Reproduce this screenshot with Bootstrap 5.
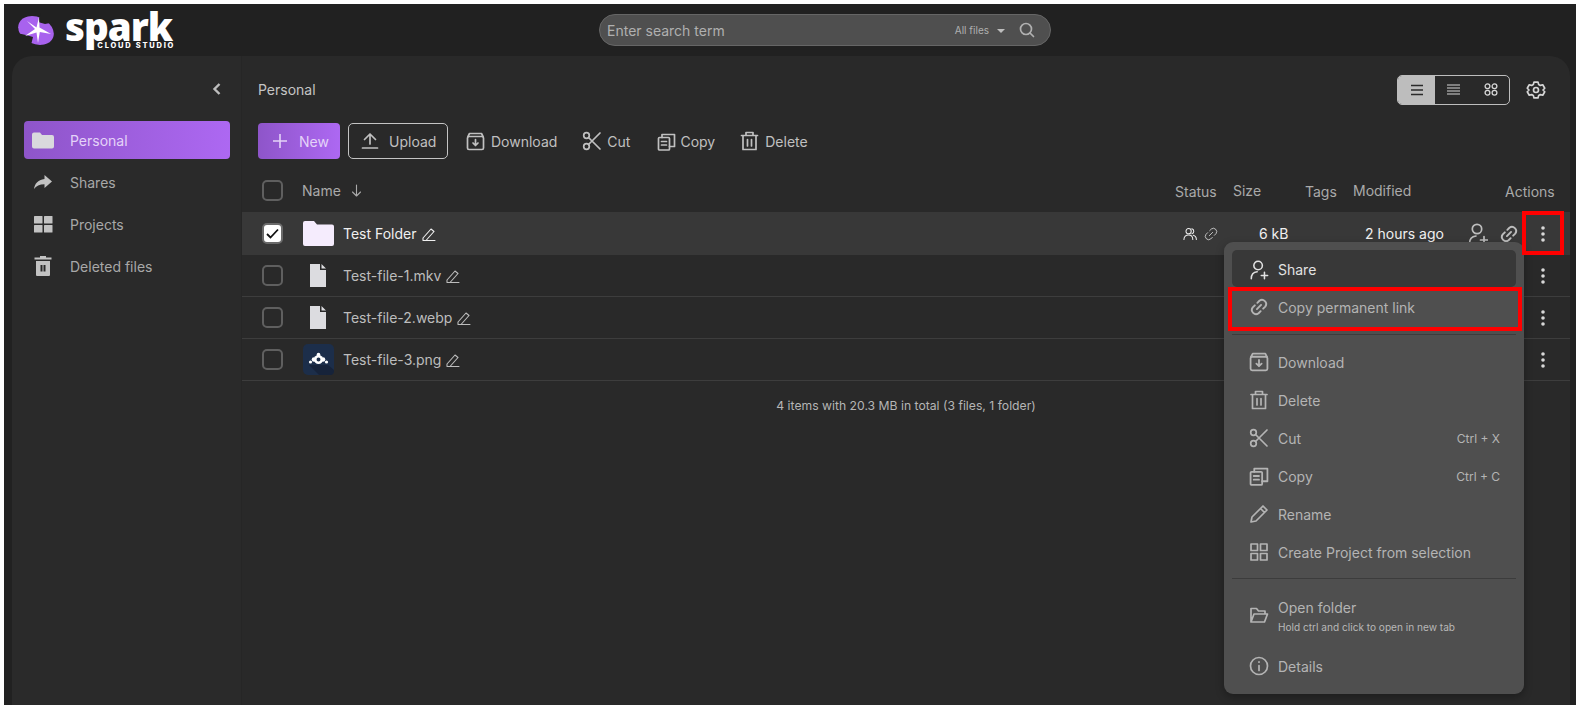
<!doctype html>
<html lang="en"><head><meta charset="utf-8">
<link href="https://cdn.jsdelivr.net/npm/bootstrap@5.3.0/dist/css/bootstrap.min.css" rel="stylesheet">
<style>
html,body{height:705px;overflow:hidden}
body{background:#fff;font-family:Inter,"Liberation Sans",sans-serif;font-size:14px;color:#bdbdbd;padding:4px 0 0 4px}
svg{display:block;flex:none}
.ic{fill:none;stroke:currentColor;stroke-width:1.7;stroke-linecap:round;stroke-linejoin:round}
.ic.thin{stroke-width:1.1}
.ic.mid{stroke-width:1.7}
.ic.link{stroke-width:2.3}
.ic.gear{stroke-width:2;color:#d6d6d6}
.shell{background:#212121;height:701px;display:flex;flex-direction:column}
.topbar{height:52px;flex:none;display:flex}
.logo{width:595px;flex:none;padding:9px 0 0 14px;gap:11px}
.wordmark{font-family:"Open Sans",sans-serif;font-weight:800;font-size:38.5px;line-height:27px;color:#fff;letter-spacing:-1px;height:27px}
.substudio{font-size:7.5px;font-weight:800;letter-spacing:1.75px;color:#fff;line-height:8px;text-align:right;margin:2px -3px 0 0}
.searchbox{margin-top:10px;width:452px;height:32px;background:#4f4f4f;border:1px solid #666;border-radius:16px;padding:0 15px 0 7px;font-size:14px;color:#b0b0b0}
.scope{font-size:10px}
.caret{width:0;height:0;border:4px solid transparent;border-top-color:#bdbdbd;border-bottom:0;margin:1px 14px 0 8px}
.workspace{flex:1;display:flex;margin:0 6px 0 8px;min-height:0}
.sidepane{width:230px;flex:none;background:#2a2a2a;border-radius:20px 0 0 0;border-right:1px solid #262626;padding:0 11px 0 12px}
.collapse-row{height:65px;padding:25px 7px 0 0;justify-content:flex-end;color:#bdbdbd}
.sideitem{height:38px;margin-bottom:4px;border-radius:4px;padding-left:7px;gap:15px;color:#a8a8a8}
.sideitem .sico{width:24px;display:flex;justify-content:center;color:#c2c2c2}
.sideitem.on{background:linear-gradient(90deg,#8e55c9,#ad68f2);color:#e4d3f8}
.sideitem.on .sico{color:#d9d9dd}
.mainpane{flex:1;background:#292929;border-radius:0 20px 0 0;min-width:0;position:relative}
.crumbline{height:67px;padding:0 24px 0 16px}
.crumbline .here{color:#c4c4c4}
.viewgroup{width:113px;height:30px;border:1px solid #bdbdbd;border-radius:5px;overflow:hidden;margin-right:16px;color:#d6d6d6}
.viewgroup span{flex:1;display:flex;align-items:center;justify-content:center}
.viewgroup span:first-child{background:#bdbdbd;color:#2a2a2a;flex:0 0 37px}
.toolbar{height:36px;padding-left:16px;color:#c0c0c0}
.btn-new{width:82px;height:36px;border:0;border-radius:4px;background:linear-gradient(90deg,#8e55c9,#ad68f2);color:#e4d3f8;gap:11px;padding:0 0 0 14px}
.btn-up{width:100px;height:36px;border:1px solid #c4c4c4;border-radius:5px;background:none;color:#c0c0c0;margin:0 18px 0 8px;gap:10px;padding:0 0 0 12px}
.tool{gap:4px;margin-right:25px}
.tool.gap6{gap:6px}
.tool.cutt{gap:5px;margin-right:27px}
.cols{display:grid;grid-template-columns:933px 58px 72px 48px 111px 106px}
.headrow{height:53px;padding-top:21px;color:#aaa;align-items:start}
.headname{padding-left:20px;gap:19px}
.headname .lbl{gap:10px}
.low{margin-top:1px}
.cellact{padding-left:41px}
.cbox{width:21px;height:21px;border:2px solid #5f5f5f;border-radius:5px;background:none;flex:none}
.filerow{height:42px;border-bottom:1px solid #3d3d3d;color:#bdbdbd;align-items:center}
.filerow.sel{background:#383838;border-bottom:0;color:#f0f0f0;height:43px}
.namecell{padding-left:20px}
.cellbox{margin-right:19px}
.fileic{width:32px;display:flex;justify-content:center;margin-right:9px}
.fname{margin-right:5px}
.cboxon{background:#fff;border-color:#6a6a6a;display:flex;align-items:center;justify-content:center;color:#111}
.statuscell{padding-left:8px;gap:6px}
.sizecell{padding-left:26px;white-space:nowrap}
.modcell{padding-left:12px;white-space:nowrap}
.actcell{justify-content:flex-end;padding-right:25px;color:#d8d8d8}
.actcell .u{margin-right:11px;color:#bdbdbd}
.actcell .l{margin-right:22px;color:#bdbdbd}
.summary{text-align:center;font-size:12.2px;color:#b5b5b5;margin-top:16px}
.redbox{position:absolute;border:4px solid #f00;pointer-events:none}
.redkebab{left:1280px;top:155px;width:42px;height:44px}
.redlink{left:986px;top:231px;width:294px;height:44px}
.ctxmenu{position:absolute;left:982px;top:186px;width:300px;height:452px;background:#4f4f4f;border-radius:9px;padding:8px 8px;color:#b4b4b4;box-shadow:0 3px 8px rgba(0,0,0,.3)}
.mi{height:38px;gap:9px;padding-left:17px;padding-right:16px;border-radius:5px}
.mi.shr{background:#383838;color:#e2e2e2;height:37px;margin-bottom:1px;padding-top:2px}
.mi.tall{height:50px;margin-bottom:1px}
.mi .kbd-hint{margin-left:auto;font-size:12px;color:#b4b4b4;margin-top:2px}
.mdiv{border-top:1px solid #3c3c3c}
.mdiv.first{margin:8px 0 8px}
.mdiv.second{margin:7px 0 11px}
.mi.tall + .mi{margin-top:7px}
.hint{font-size:10.1px;color:#b8b8b8;margin-top:3px;line-height:12px}
</style></head><body>
<div class="shell">
 <header class="topbar">
  <div class="logo d-flex">
   <svg width="36" height="35" viewBox="0 0 36 35"><ellipse cx="18" cy="17.500" rx="18.500" ry="13.500" transform="rotate(24 18 17.500)" fill="#a862ee"/><path d="M23 -1L20 9 27 11 37 9V-1zM-1 20L8 22 15 24 12 36H-1z" fill="#212121"/><path d="M21 4L21.500 14.500 33 21 21.800 19 20 30 18.500 19.500 7 23 17 16 9 8 18.500 14.500z" fill="#fff"/></svg>
   <div><div class="wordmark">spark</div><div class="substudio">CLOUD STUDIO</div></div>
  </div>
  <div class="searchbox d-flex align-items-center"><span class="flex-grow-1">Enter search term</span><span class="scope">All files</span><span class="caret"></span>
   <svg class="ic" width="16" height="16" viewBox="0 0 16 16"><circle cx="7" cy="7" r="5.500"/><path d="M11 11l3.500 3.500"/></svg></div>
 </header>
 <div class="workspace">
  <aside class="sidepane">
   <div class="collapse-row d-flex"><svg width="12" height="16" viewBox="0 0 12 16" fill="none" stroke="currentColor" stroke-width="2.400"><path d="M8.500 3L3.500 8l5 5"/></svg></div>
   <div class="sideitem on d-flex align-items-center"><span class="sico"><svg width="22" height="17" viewBox="0 0 22 16" fill="currentColor"><path d="M0 2a2 2 0 012-2h6l2 2.500h10a2 2 0 012 2V14a2 2 0 01-2 2H2a2 2 0 01-2-2z"/></svg></span>Personal</div>
   <div class="sideitem d-flex align-items-center"><span class="sico"><svg width="20" height="16" viewBox="0 0 20 16" fill="currentColor"><path d="M11.500 1L19 7.500 11.500 14v-3.800C6.500 10.200 3.200 11.800 1 15c.7-5 3.700-9.300 10.500-10z"/></svg></span>Shares</div>
   <div class="sideitem d-flex align-items-center"><span class="sico"><svg width="19" height="17" viewBox="0 0 19 17" fill="currentColor"><rect width="8.500" height="7.500" rx=".6"/><rect x="10" width="8.500" height="7.500" rx=".6"/><rect y="9" width="8.500" height="7.500" rx=".6"/><rect x="10" y="9" width="8.500" height="7.500" rx=".6"/></svg></span>Projects</div>
   <div class="sideitem d-flex align-items-center"><span class="sico"><svg width="18" height="20" viewBox="0 0 18 20" fill="currentColor"><path d="M6 0h6v1.500h5.500v2H.5v-2H6zM2 5h14v14a1 1 0 01-1 1H3a1 1 0 01-1-1zm4.500 4v6.500h2V9zm3 0v6.500h2V9z" fill-rule="evenodd"/></svg></span>Deleted files</div>
  </aside>
  <main class="mainpane">
   <div class="crumbline d-flex align-items-center justify-content-between"><span class="here">Personal</span>
    <div class="d-flex align-items-center">
     <div class="viewgroup d-flex">
      <span><svg width="14" height="12" viewBox="0 0 14 12" stroke="currentColor" stroke-width="1.500"><path d="M1 1.500h12M1 6h12M1 10.500h12"/></svg></span>
      <span><svg width="13" height="11" viewBox="0 0 13 11" stroke="currentColor" stroke-width="1.200"><path d="M0 1h13M0 4h13M0 7h13M0 10h13"/></svg></span>
      <span><svg width="14" height="13" viewBox="0 0 14 13" fill="none" stroke="currentColor" stroke-width="1.300"><circle cx="3.500" cy="3.300" r="2.400"/><circle cx="10.500" cy="3.300" r="2.400"/><circle cx="3.500" cy="9.700" r="2.400"/><circle cx="10.500" cy="9.700" r="2.400"/></svg></span>
     </div>
     <svg class="ic gear" width="20" height="20" viewBox="0 0 24 24"><circle cx="12" cy="12" r="3"/><path d="M9.600 2.500h4.800l.8 2.900 2 1.100 2.900-.8 2.400 4.200L20.400 12l2.100 2.100-2.400 4.200-2.900-.8-2 1.100-.8 2.900H9.600l-.8-2.900-2-1.100-2.900.8-2.400-4.200L3.600 12 1.500 9.900l2.400-4.200 2.900.8 2-1.100z"/></svg>
    </div></div>
   <div class="toolbar d-flex align-items-center">
    <button class="btn-new d-flex align-items-center"><svg width="16" height="16" viewBox="0 0 16 16" stroke="currentColor" stroke-width="1.600"><path d="M8 1v14M1 8h14"/></svg>New</button>
    <button class="btn-up d-flex align-items-center"><svg class="ic" width="18" height="18" viewBox="0 0 18 18"><path d="M9 12V2M3.500 7.500L9 2l5.500 5.500M1.500 16h15"/></svg>Upload</button>
    <span class="tool gap6 d-flex align-items-center"><svg class="ic" width="19" height="19" viewBox="0 0 19 19"><rect x="1.500" y="4.500" width="16" height="13" rx="1.500"/><path d="M2 4.500L3.500 1.500h12l1.500 3M9.500 7.500v6M7 11l2.500 2.500L12 11"/></svg>Download</span>
    <span class="tool cutt d-flex align-items-center"><svg class="ic" width="20" height="20" viewBox="0 0 20 20"><circle cx="4.500" cy="4.500" r="2.800"/><circle cx="4.500" cy="15.500" r="2.800"/><path d="M6.500 6.500L18 18M6.500 13.500L18 2"/></svg>Cut</span>
    <span class="tool d-flex align-items-center"><svg class="ic" width="19" height="19" viewBox="0 0 19 19"><rect x="1.500" y="5.500" width="11" height="12.500" rx="1"/><path d="M5 5.500V2.500h12.500v12h-5M4.500 9.500h5M4.500 13h5"/></svg>Copy</span>
    <span class="tool gap6 d-flex align-items-center"><svg class="ic" width="19" height="20" viewBox="0 0 19 20"><path d="M1.500 4.500h16M6 4.500V1.500h7v3M3 4.500h13V18.500H3zM7.500 8.500v6.500M11.500 8.500v6.500"/></svg>Delete</span>
   </div>
   <div class="headrow cols">
    <div class="headname d-flex"><span class="cbox"></span><span class="lbl d-flex align-items-center">Name <svg class="ic thin" width="11" height="13" viewBox="0 0 11 13"><path d="M5.500 1v11M1.500 8l4 4 4-4"/></svg></span></div>
    <span class="low">Status</span><span>Size</span><span class="low">Tags</span><span>Modified</span><span class="low cellact">Actions</span>
   </div>
   <div class="filerow sel cols">
    <div class="namecell d-flex align-items-center"><span class="cbox cboxon cellbox"><svg width="13" height="11" viewBox="0 0 13 11" fill="none" stroke="currentColor" stroke-width="1.800"><path d="M1 6l3.500 3.500L12 1.500"/></svg></span>
    <span class="fileic"><svg width="31" height="25" viewBox="0 0 31 25" fill="#f5ecfd"><path d="M0 2a2 2 0 012-2h9l3 3.500h15a2 2 0 012 2V23a2 2 0 01-2 2H2a2 2 0 01-2-2z"/></svg></span>
    <span class="fname">Test Folder</span><svg class="ic thin" width="14" height="14" viewBox="0 0 14 14"><path d="M1 11l8-9 3 2.500-8 9H1zM1 13.500h12"/></svg></div>
    <div class="statuscell d-flex align-items-center"><svg class="ic thin" width="14" height="14" viewBox="0 0 15 14"><circle cx="6" cy="4" r="2.800"/><path d="M1 13c0-3 2-5 5-5s4.500 2 4.500 5M9.500 1.300a2.800 2.800 0 010 5.400M11 8.300c2 .5 3.300 2.300 3.300 4.700"/></svg>
    <svg class="ic thin" width="16" height="16" viewBox="0 0 24 24"><path d="M9.500 14.500l5-5M10 7l2.500-2.500a5 5 0 017 7L17 14M14 17l-2.500 2.500a5 5 0 01-7-7L7 10"/></svg></div>
    <span class="sizecell">6 kB</span><span></span><span class="modcell">2 hours ago</span>
    <div class="actcell d-flex align-items-center"><svg class="ic mid u" width="20" height="22" viewBox="0 0 20 22"><circle cx="9" cy="6" r="4.700"/><path d="M1.500 20.500c0-4 2.500-7 6.500-7.500M16 13.500v7M12.500 17h7"/></svg>
    <svg class="ic link l" width="20" height="20" viewBox="0 0 24 24"><path d="M9.500 14.500l5-5M10 7l2.500-2.500a5 5 0 017 7L17 14M14 17l-2.500 2.500a5 5 0 01-7-7L7 10"/></svg>
    <svg width="4" height="16" viewBox="0 0 4 16" fill="currentColor"><circle cx="2" cy="2" r="1.800"/><circle cx="2" cy="8" r="1.800"/><circle cx="2" cy="14" r="1.800"/></svg></div>
   </div>
   <div class="filerow cols">
    <div class="namecell d-flex align-items-center"><span class="cbox cellbox"></span><span class="fileic"><svg width="16" height="23" viewBox="0 0 16 23" fill="#dcdce0"><path d="M0 0h10v6h6v17H0zM11.500 0L16 4.500h-4.500z"/></svg></span>
    <span class="fname">Test-file-1.mkv</span><svg class="ic thin" width="14" height="14" viewBox="0 0 14 14"><path d="M1 11l8-9 3 2.500-8 9H1zM1 13.500h12"/></svg></div>
    <span></span><span></span><span></span><span></span>
    <div class="actcell d-flex align-items-center"><svg width="4" height="16" viewBox="0 0 4 16" fill="currentColor"><circle cx="2" cy="2" r="1.800"/><circle cx="2" cy="8" r="1.800"/><circle cx="2" cy="14" r="1.800"/></svg></div>
   </div>
   <div class="filerow cols">
    <div class="namecell d-flex align-items-center"><span class="cbox cellbox"></span><span class="fileic"><svg width="16" height="23" viewBox="0 0 16 23" fill="#dcdce0"><path d="M0 0h10v6h6v17H0zM11.500 0L16 4.500h-4.500z"/></svg></span>
    <span class="fname">Test-file-2.webp</span><svg class="ic thin" width="14" height="14" viewBox="0 0 14 14"><path d="M1 11l8-9 3 2.500-8 9H1zM1 13.500h12"/></svg></div>
    <span></span><span></span><span></span><span></span>
    <div class="actcell d-flex align-items-center"><svg width="4" height="16" viewBox="0 0 4 16" fill="currentColor"><circle cx="2" cy="2" r="1.800"/><circle cx="2" cy="8" r="1.800"/><circle cx="2" cy="14" r="1.800"/></svg></div>
   </div>
   <div class="filerow cols">
    <div class="namecell d-flex align-items-center"><span class="cbox cellbox"></span><span class="fileic"><svg width="31" height="31" viewBox="0 0 31 31"><rect width="31" height="31" rx="5" fill="#1c2e4a"/><path d="M16 31L6 21h19l6 5v1a4 4 0 01-4 4z" fill="#16233a"/><circle cx="15.500" cy="15.500" r="4.500" fill="#fff"/><circle cx="15.500" cy="15.500" r="2" fill="#1c2e4a"/><circle cx="11" cy="15.500" r="2.300" fill="#fff"/><circle cx="20" cy="15.500" r="2.300" fill="#fff"/><circle cx="15.500" cy="10.500" r="1.800" fill="#fff"/><circle cx="7.500" cy="18" r="1.600" fill="#fff"/><circle cx="23.500" cy="18" r="1.600" fill="#fff"/></svg></span>
    <span class="fname">Test-file-3.png</span><svg class="ic thin" width="14" height="14" viewBox="0 0 14 14"><path d="M1 11l8-9 3 2.500-8 9H1zM1 13.500h12"/></svg></div>
    <span></span><span></span><span></span><span></span>
    <div class="actcell d-flex align-items-center"><svg width="4" height="16" viewBox="0 0 4 16" fill="currentColor"><circle cx="2" cy="2" r="1.800"/><circle cx="2" cy="8" r="1.800"/><circle cx="2" cy="14" r="1.800"/></svg></div>
   </div>
   <div class="summary">4 items with 20.3 MB in total (3 files, 1 folder)</div>
   <div class="ctxmenu">
    <div class="mi shr d-flex align-items-center"><svg class="ic mid" width="20" height="20" viewBox="0 0 20 22"><circle cx="9" cy="6" r="4.700"/><path d="M1.500 20.500c0-4 2.500-7 6.500-7.500M16 13.500v7M12.500 17h7"/></svg>Share</div>
    <div class="mi d-flex align-items-center"><svg class="ic link" width="20" height="20" viewBox="0 0 24 24"><path d="M9.500 14.500l5-5M10 7l2.500-2.500a5 5 0 017 7L17 14M14 17l-2.500 2.500a5 5 0 01-7-7L7 10"/></svg>Copy permanent link</div>
    <div class="mdiv first"></div>
    <div class="mi d-flex align-items-center"><svg class="ic" width="20" height="20" viewBox="0 0 19 19"><rect x="1.500" y="4.500" width="16" height="13" rx="1.500"/><path d="M2 4.500L3.500 1.500h12l1.500 3M9.500 7.500v6M7 11l2.500 2.500L12 11"/></svg>Download</div>
    <div class="mi d-flex align-items-center"><svg class="ic" width="20" height="20" viewBox="0 0 19 20"><path d="M1.500 4.500h16M6 4.500V1.500h7v3M3 4.500h13V18.500H3zM7.500 8.500v6.500M11.500 8.500v6.500"/></svg>Delete</div>
    <div class="mi d-flex align-items-center"><svg class="ic" width="20" height="20" viewBox="0 0 20 20"><circle cx="4.500" cy="4.500" r="2.800"/><circle cx="4.500" cy="15.500" r="2.800"/><path d="M6.500 6.500L18 18M6.500 13.500L18 2"/></svg>Cut<span class="kbd-hint">Ctrl + X</span></div>
    <div class="mi d-flex align-items-center"><svg class="ic" width="20" height="20" viewBox="0 0 19 19"><rect x="1.500" y="5.500" width="11" height="12.500" rx="1"/><path d="M5 5.500V2.500h12.500v12h-5M4.500 9.500h5M4.500 13h5"/></svg>Copy<span class="kbd-hint">Ctrl + C</span></div>
    <div class="mi d-flex align-items-center"><svg class="ic" width="20" height="20" viewBox="0 0 20 20"><path d="M2 18l1-5L14 2l4 4L7 17zM11.500 4.500l4 4"/></svg>Rename</div>
    <div class="mi d-flex align-items-center"><svg class="ic" width="20" height="20" viewBox="0 0 20 20"><rect x="2" y="2" width="6.500" height="6.500"/><rect x="11.500" y="2" width="6.500" height="6.500"/><rect x="2" y="11.500" width="6.500" height="6.500"/><rect x="11.500" y="11.500" width="6.500" height="6.500"/></svg>Create Project from selection</div>
    <div class="mdiv second"></div>
    <div class="mi tall d-flex align-items-center"><svg class="ic" width="20" height="20" viewBox="0 0 20 20"><path d="M2 17V3.500h5.500l2 2.500h6.500v3M2 17l3-8h13.500l-3 8z"/></svg><div><div>Open folder</div><div class="hint">Hold ctrl and click to open in new tab</div></div></div>
    <div class="mi d-flex align-items-center"><svg class="ic" width="20" height="20" viewBox="0 0 20 20"><circle cx="10" cy="10" r="8.500"/><path d="M10 9.500v5M10 5.800v.4"/></svg>Details</div>
   </div>
   <div class="redbox redkebab"></div>
   <div class="redbox redlink"></div>
  </main>
 </div>
</div>
<script src="https://cdn.jsdelivr.net/npm/bootstrap@5.3.0/dist/js/bootstrap.bundle.min.js"></script>
</body></html>
